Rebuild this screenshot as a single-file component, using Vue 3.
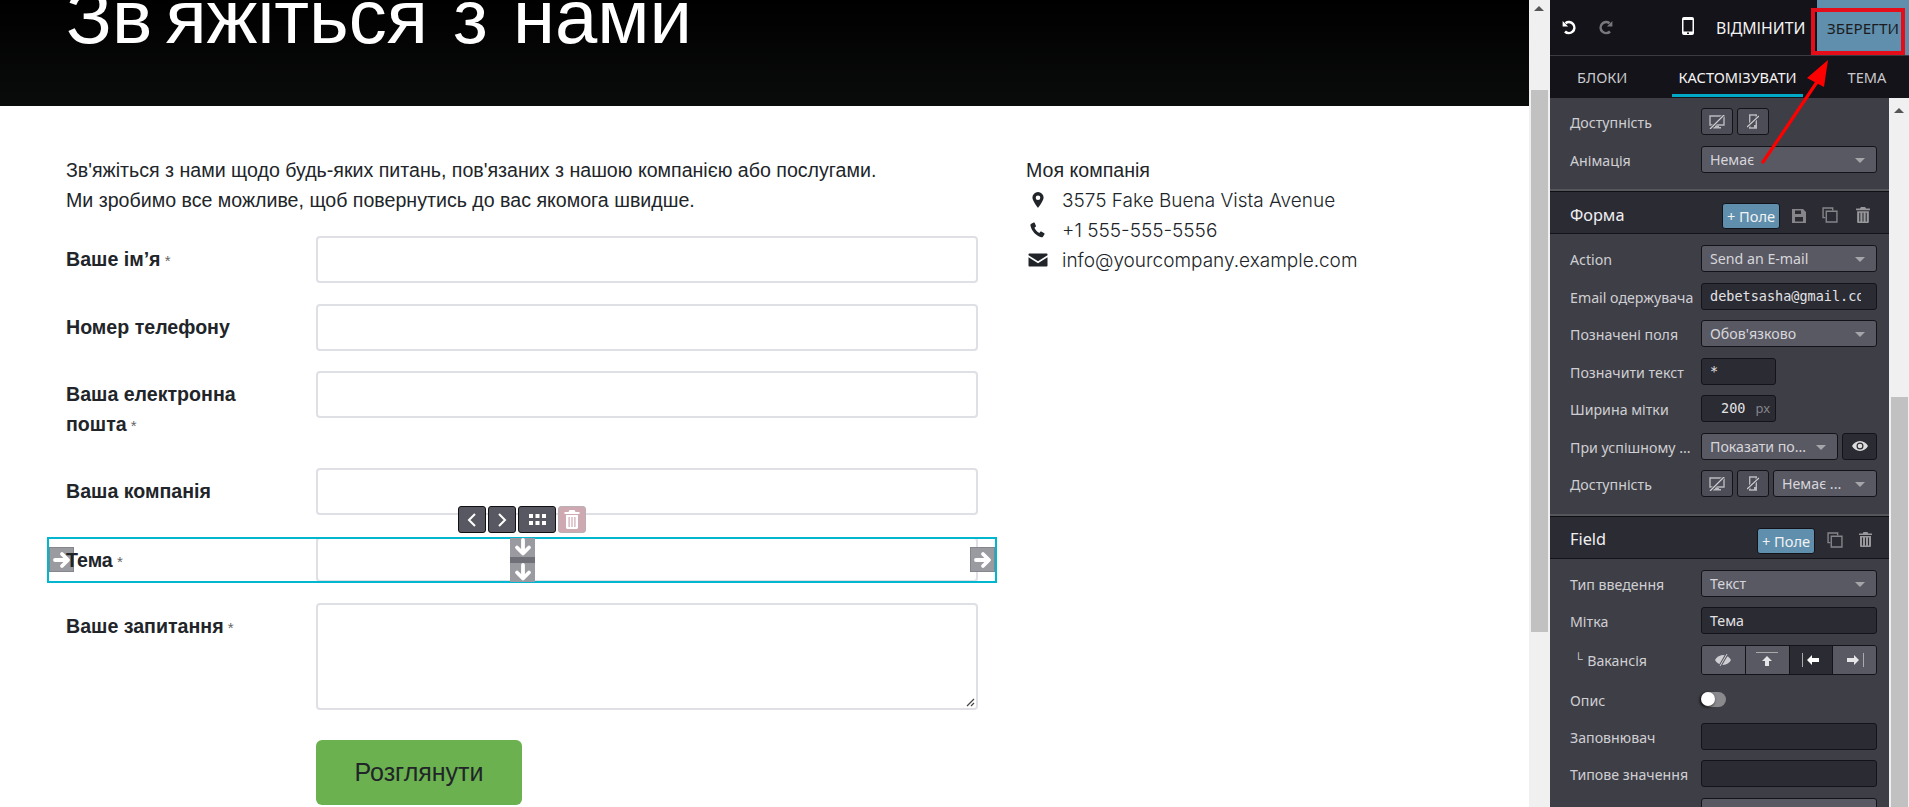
<script setup>
const fields = [
  { label: 'Ваше ім’я', req: true, cls: '' },
  { label: 'Номер телефону', req: false, cls: '' },
  { label: 'Ваша електронна пошта', req: true, cls: 'tall' },
  { label: 'Ваша компанія', req: false, cls: '' },
  { label: 'Тема', req: true, cls: 'selected' },
]
</script>

<template>
  <div class="app">
    <main class="page">
      <header class="hero"><h1><span class="first-word">Зв</span> яжіться з нами</h1></header>
      <section class="content">
        <div class="main-col">
          <p class="intro">Зв'яжіться з нами щодо будь-яких питань, пов'язаних з нашою компанією або послугами.<br>Ми зробимо все можливе, щоб повернутись до вас якомога швидше.</p>
          <form class="form" @submit.prevent>
            <div v-for="f in fields" :key="f.label" class="row" :class="f.cls">
              <label class="lab">{{ f.label }}<span v-if="f.req" class="req"> *</span></label>
              <div class="inp"></div>
            </div>
            <div class="row">
              <label class="lab">Ваше запитання<span class="req"> *</span></label>
              <div class="inp area">
                <svg class="grip" width="10" height="10" viewBox="0 0 10 10"><path d="M9 2 2 9M9 6 6 9" stroke="#444" stroke-width="1.2"/></svg>
              </div>
            </div>
            <div class="row submit">
              <span></span>
              <button class="send" type="button">Розглянути</button>
            </div>
          </form>
        </div>
        <aside class="contact">
          <div class="c-title">Моя компанія</div>
          <div class="c-row">
            <svg class="c-ic" width="18" height="18" viewBox="0 0 18 18"><path fill-rule="evenodd" fill="#212529" d="M9 1a5.6 5.6 0 0 0-5.6 5.6C3.400 10 9 17 9 17s5.600-7 5.600-10.400A5.600 5.600 0 0 0 9 1Zm0 3.400a2.300 2.300 0 1 1 0 4.600 2.300 2.300 0 0 1 0-4.600Z"/></svg>
            <span>3575 Fake Buena Vista Avenue</span>
          </div>
          <div class="c-row">
            <svg class="c-ic" width="18" height="18" viewBox="0 0 18 18"><path fill="#212529" d="M4.600 1.500 2.300 2.700c-.7.400-1 1.200-.8 2 1.300 5.500 5.300 9.800 10.600 11.600.8.200 1.600-.1 2-.8l1.400-2.300c.2-.4.100-.8-.2-1l-3-1.700c-.4-.2-.8-.1-1 .2l-1 1.300c-2.200-1-4-3-4.900-5.200l1.300-1c.3-.3.400-.7.200-1.100L5.600 1.800c-.2-.4-.6-.5-1-.3Z"/></svg>
            <span>+1 555-555-5556</span>
          </div>
          <div class="c-row">
            <svg class="c-ic" width="20" height="18" viewBox="0 0 20 18"><path fill="#212529" d="M1.500 2.500h17c.6 0 1 .4 1 1v.8L10 10.300.5 4.300v-.8c0-.6.4-1 1-1ZM.5 6.200 10 12.200l9.500-6v8.300c0 .6-.4 1-1 1h-17c-.6 0-1-.4-1-1Z"/></svg>
            <span>info@yourcompany.example.com</span>
          </div>
        </aside>
      </section>

      <div class="sel-box"></div>
      <div class="handle h-left"><svg width="20" height="20" viewBox="0 0 20 20"><path d="M3 10h12M10 4l6 6-6 6" fill="none" stroke="#fff" stroke-width="3.800" stroke-linecap="round" stroke-linejoin="round"/></svg></div>
      <div class="handle h-right"><svg width="20" height="20" viewBox="0 0 20 20"><path d="M3 10h12M10 4l6 6-6 6" fill="none" stroke="#fff" stroke-width="3.800" stroke-linecap="round" stroke-linejoin="round"/></svg></div>
      <div class="handle-v">
        <div class="hv"><svg width="20" height="19" viewBox="0 0 20 19"><path d="M10 2v13M4 9.500l6 6 6-6" fill="none" stroke="#fff" stroke-width="3.800" stroke-linecap="round" stroke-linejoin="round"/></svg></div>
        <div class="hv-mid"></div>
        <div class="hv"><svg width="20" height="19" viewBox="0 0 20 19"><path d="M10 2v13M4 9.500l6 6 6-6" fill="none" stroke="#fff" stroke-width="3.800" stroke-linecap="round" stroke-linejoin="round"/></svg></div>
      </div>
      <div class="toolbar">
        <div class="tb"><svg width="12" height="16" viewBox="0 0 12 16"><path d="M9 2 3 8l6 6" fill="none" stroke="#fff" stroke-width="2"/></svg></div>
        <div class="tb"><svg width="12" height="16" viewBox="0 0 12 16"><path d="m3 2 6 6-6 6" fill="none" stroke="#fff" stroke-width="2"/></svg></div>
        <div class="tb wide"><svg width="17" height="11" viewBox="0 0 17 11"><path fill="#fff" d="M0 0h4v4H0zM6.500 0h4v4h-4zM13 0h4v4h-4zM0 7h4v4H0zM6.500 7h4v4h-4zM13 7h4v4h-4z"/></svg></div>
        <div class="tb danger"><svg width="16" height="19" viewBox="0 0 16 19"><path fill="#fff" d="M5.500 0h5l1 2H15.500v2H.5V2h4ZM2 5h12v12.500c0 .8-.7 1.500-1.500 1.500h-9C2.700 19 2 18.300 2 17.500Zm2.500 2v10h1.200V7Zm2.900 0v10h1.200V7Zm2.900 0v10h1.200V7Z"/></svg></div>
      </div>
    </main>

    <div class="scroll outer"><span class="up"></span><span class="thumb t1"></span></div>

    <aside class="side">
      <div class="top">
        <svg class="undo" width="15" height="15" viewBox="0 0 15 15"><path d="M3.500 3.200A5.500 5.500 0 1 1 3 11.500" fill="none" stroke="#fff" stroke-width="2.600"/><path fill="#fff" d="M.6 1v5.500h5.500Z"/></svg>
        <svg class="redo" width="15" height="15" viewBox="0 0 15 15"><path d="M11.500 3.200A5.500 5.500 0 1 0 12 11.500" fill="none" stroke="#77777c" stroke-width="2.600"/><path fill="#77777c" d="M14.400 1v5.500H8.900Z"/></svg>
        <svg class="phone" width="12" height="18" viewBox="0 0 12 18"><path fill-rule="evenodd" fill="#fff" d="M2 0h8a2 2 0 0 1 2 2v14a2 2 0 0 1-2 2H2a2 2 0 0 1-2-2V2a2 2 0 0 1 2-2Zm-.5 3v11.500h9V3Zm3.500 12.500V17h2v-1.500Z"/></svg>
        <span class="cancel">ВІДМІНИТИ</span>
        <button class="save" type="button">ЗБЕРЕГТИ</button>
      </div>
      <nav class="tabs">
        <span class="tab">БЛОКИ</span>
        <span class="tab on">КАСТОМІЗУВАТИ</span>
        <span class="tab">ТЕМА</span>
      </nav>
      <div class="body">
        <div class="panel">
          <div class="sec first">
            <div class="p-row">
              <span class="p-lab">Доступність</span>
              <div class="ctrls">
                <button class="ic" type="button"><svg width="16" height="14" viewBox="0 0 16 14"><path d="M1 1h14v9H1Z" fill="none" stroke="#b9b9bf" stroke-width="1.400"/><path fill="#b9b9bf" d="M6 11h4v1h2v1.500H4V12h2Z"/><path d="M15 0 1 14" stroke="#4d4d57" stroke-width="3"/><path d="M15 0 1 14" stroke="#d0d0d4" stroke-width="1.200"/></svg></button>
                <button class="ic" type="button"><svg width="12" height="15" viewBox="0 0 12 15"><path d="M2.700 1h6.600v13H2.700Z" fill="none" stroke="#b9b9bf" stroke-width="1.400"/><path fill="#b9b9bf" d="M7 11h2v3H7Z"/><path d="M12 2 0 13" stroke="#4d4d57" stroke-width="3"/><path d="M12 2 0 13" stroke="#d0d0d4" stroke-width="1.200"/></svg></button>
              </div>
            </div>
            <div class="p-row">
              <span class="p-lab">Анімація</span>
              <div class="sel full">Немає<i class="caret"></i></div>
            </div>
          </div>

          <div class="sec-head">
            <span class="s-title">Форма</span>
            <button class="add" type="button">+ Поле</button>
            <svg class="s-ic save-ic" width="14" height="14" viewBox="0 0 14 14"><path fill-rule="evenodd" fill="#85858a" d="M0 0h11l3 3v11H0Zm3 1.500V5h6V1.500ZM3 8v4.500h8V8Z"/></svg>
            <svg class="s-ic copy-ic" width="16" height="16" viewBox="0 0 15 15"><path d="M10 3V1H1v9h2M4 4h10v10H4Z" fill="none" stroke="#85858a" stroke-width="1.300"/></svg>
            <svg class="s-ic trash-ic" width="14" height="16" viewBox="0 0 13 15"><path fill="#97979c" d="M4.500 0h4l.8 1.500H13V3H0V1.500h3.700ZM1 4h11v10a1 1 0 0 1-1 1H2a1 1 0 0 1-1-1Zm2 1.500V13.500h1V5.500Zm3 0V13.500h1V5.500Zm3 0V13.500h1V5.500Z"/></svg>
          </div>
          <div class="sec">
            <div class="p-row"><span class="p-lab">Action</span><div class="sel full">Send an E-mail<i class="caret"></i></div></div>
            <div class="p-row"><span class="p-lab">Email одержувача</span><div class="txt full mono"><span class="clip">debetsasha@gmail.com</span></div></div>
            <div class="p-row"><span class="p-lab">Позначені поля</span><div class="sel full">Обов'язково<i class="caret"></i></div></div>
            <div class="p-row"><span class="p-lab">Позначити текст</span><div class="txt short mono">*</div></div>
            <div class="p-row"><span class="p-lab">Ширина мітки</span><div class="txt short mono num">200 <em>px</em></div></div>
            <div class="p-row">
              <span class="p-lab">При успішному ...</span>
              <div class="ctrls">
                <div class="sel w137">Показати по...<i class="caret"></i></div>
                <button class="ic eye" type="button"><svg width="16" height="12" viewBox="0 0 16 12"><path fill-rule="evenodd" fill="#ddd" d="M8 1c3.500 0 6.500 2.200 8 5-1.500 2.800-4.500 5-8 5S1.500 8.800 0 6c1.500-2.800 4.500-5 8-5Zm0 1.500a3.500 3.500 0 1 0 0 7 3.500 3.500 0 0 0 0-7Z"/><circle cx="8" cy="6" r="2.300" fill="#ddd"/></svg></button>
              </div>
            </div>
            <div class="p-row">
              <span class="p-lab">Доступність</span>
              <div class="ctrls">
                <button class="ic" type="button"><svg width="16" height="14" viewBox="0 0 16 14"><path d="M1 1h14v9H1Z" fill="none" stroke="#b9b9bf" stroke-width="1.400"/><path fill="#b9b9bf" d="M6 11h4v1h2v1.500H4V12h2Z"/><path d="M15 0 1 14" stroke="#4d4d57" stroke-width="3"/><path d="M15 0 1 14" stroke="#d0d0d4" stroke-width="1.200"/></svg></button>
                <button class="ic" type="button"><svg width="12" height="15" viewBox="0 0 12 15"><path d="M2.700 1h6.600v13H2.700Z" fill="none" stroke="#b9b9bf" stroke-width="1.400"/><path fill="#b9b9bf" d="M7 11h2v3H7Z"/><path d="M12 2 0 13" stroke="#4d4d57" stroke-width="3"/><path d="M12 2 0 13" stroke="#d0d0d4" stroke-width="1.200"/></svg></button>
                <div class="sel w104">Немає ...<i class="caret"></i></div>
              </div>
            </div>
          </div>

          <div class="sec-head">
            <span class="s-title">Field</span>
            <button class="add field" type="button">+ Поле</button>
            <svg class="s-ic f-copy" width="16" height="16" viewBox="0 0 15 15"><path d="M10 3V1H1v9h2M4 4h10v10H4Z" fill="none" stroke="#85858a" stroke-width="1.300"/></svg>
            <svg class="s-ic f-trash" width="13" height="15" viewBox="0 0 13 15"><path fill="#97979c" d="M4.500 0h4l.8 1.500H13V3H0V1.500h3.700ZM1 4h11v10a1 1 0 0 1-1 1H2a1 1 0 0 1-1-1Zm2 1.500V13.500h1V5.500Zm3 0V13.500h1V5.500Zm3 0V13.500h1V5.500Z"/></svg>
          </div>
          <div class="sec">
            <div class="p-row"><span class="p-lab">Тип введення</span><div class="sel full">Текст<i class="caret"></i></div></div>
            <div class="p-row"><span class="p-lab">Мітка</span><div class="txt full">Тема</div></div>
            <div class="p-row seg-row">
              <span class="p-lab sub"><b>└</b> Вакансія</span>
              <div class="seg">
                <span><svg width="16" height="12" viewBox="0 0 16 12"><path fill="#cfcfd3" d="M8 1c3.500 0 6.500 2.200 8 5-1.500 2.800-4.500 5-8 5S1.500 8.800 0 6c1.500-2.800 4.500-5 8-5Z"/><path d="M12 0 5 12" stroke="#595964" stroke-width="3"/><path d="M12 0 5 12" stroke="#cfcfd3" stroke-width="1"/></svg></span>
                <span><svg width="22" height="15" viewBox="0 0 22 15"><path d="M0 .5h22" stroke="#aaa"/><path fill="#e6e6e8" d="m11 4 5 5h-3v5H9V9H6Z"/></svg></span>
                <span class="active"><svg width="18" height="14" viewBox="0 0 18 14"><path d="M.5 0v14" stroke="#aaa"/><path fill="#fff" d="m5 7 5-5v3h7v4h-7v3Z"/></svg></span>
                <span><svg width="18" height="14" viewBox="0 0 18 14"><path d="M17.500 0v14" stroke="#aaa"/><path fill="#e6e6e8" d="m13 7-5-5v3H1v4h7v3Z"/></svg></span>
              </div>
            </div>
            <div class="p-row tog-row"><span class="p-lab">Опис</span><div class="toggle"><i></i></div></div>
            <div class="p-row"><span class="p-lab">Заповнювач</span><div class="txt full"></div></div>
            <div class="p-row"><span class="p-lab">Типове значення</span><div class="txt full"></div></div>
            <div class="p-row"><span class="p-lab"></span><div class="sel full"></div></div>
          </div>
        </div>
        <div class="scroll inner"><span class="up low"></span><span class="thumb t2"></span></div>
      </div>
    </aside>

    <div class="red-box"></div>
    <svg class="red-arrow" width="90" height="120" viewBox="0 0 90 120">
      <path d="M4 106 58 26" stroke="#f00" stroke-width="3.200" stroke-linecap="round"/>
      <path fill="#f00" d="M69 4 48 22l17 9Z"/>
    </svg>
  </div>
</template>

<style>
html, body { margin: 0; background: #fff; overflow: hidden; }
</style>

<style scoped>
.app { position: relative; display: flex; width: 1909px; height: 807px; overflow: hidden; font-family: "Liberation Sans", Arial, sans-serif; color: #212529; }
.page { position: relative; width: 1529px; flex: none; background: #fff; }
.hero { height: 106px; background: linear-gradient(#000, #0a0b0b); overflow: hidden; padding-left: 66px; }
.hero h1 { margin: -28px 0 0; font-weight: 400; font-size: 76px; line-height: 90px; color: #fff; white-space: nowrap; word-spacing: 4px; }
.first-word { margin-right: -12px; }
.content { display: flex; padding: 49px 0 0 66px; }
.main-col { width: 912px; flex: none; }
.intro { margin: 0 0 21px; font-size: 19.600px; line-height: 30px; white-space: nowrap; }
.row { display: grid; grid-template-columns: 250px 662px; margin-bottom: 20.500px; }
.row.tall { min-height: 76.500px; }
.row.selected { margin-top: 22px; margin-bottom: 21px; }
.row.selected .inp { height: 45px; }
.row.selected .lab { position: relative; z-index: 2; }
.lab { font-weight: 700; font-size: 19.600px; line-height: 30px; padding-top: 8px; padding-right: 40px; }
.req { font-weight: 400; font-size: 15px; color: #666; }
.inp { height: 47px; box-sizing: border-box; border: 2px solid #dee0e6; border-radius: 4px; background: #fff; }
.area { position: relative; height: 107px; }
.grip { position: absolute; right: 1px; bottom: 1px; }
.row.submit { margin-top: 30px; margin-bottom: 0; }
.send { width: 206px; height: 65px; border: 0; border-radius: 6px; background: #6bb14f; color: #212529; font: 400 25px "Liberation Sans", Arial, sans-serif; }
.contact { margin-left: 48px; width: 400px; font-size: 19.600px; }
.c-title { line-height: 30px; }
.c-row { display: flex; align-items: center; height: 30px; font-family: Inter, sans-serif; font-weight: 300; font-size: 19px; white-space: nowrap; }
.c-ic { width: 24px; flex: none; margin-right: 12px; }

.sel-box { position: absolute; left: 47px; top: 537px; width: 950px; height: 46px; box-sizing: border-box; border: 2px solid #00b7cf; }
.handle { position: absolute; z-index: 1; top: 547px; width: 25px; height: 25px; box-sizing: border-box; border: 1px solid #85858d; background: #9a9aa1; display: flex; align-items: center; justify-content: center; }
.h-left { left: 49px; }
.h-right { left: 970px; }
.handle-v { position: absolute; left: 510px; top: 538px; width: 25px; display: flex; flex-direction: column; }
.hv { height: 19px; background: #9a9aa1; display: flex; align-items: center; justify-content: center; }
.hv-mid { height: 6px; background: #707079; }
.toolbar { position: absolute; left: 458px; top: 506px; display: flex; gap: 2px; }
.tb { box-sizing: border-box; width: 28px; height: 27px; border: 1px solid #111; border-radius: 3px; background: #585862; display: flex; align-items: center; justify-content: center; }
.tb.wide { width: 38px; }
.tb.danger { background: #cfa9b2; border-color: #b8b0b4; }

.scroll { background: #f0f0f0; position: relative; flex: none; }
.outer { width: 21px; height: 807px; }
.inner { width: 20px; height: 100%; }
.up { position: absolute; left: 5px; top: 6px; width: 0; height: 0; border: 5px solid transparent; border-top: 0; border-bottom: 5px solid #555; }
.up.low { top: 10px; }
.thumb { position: absolute; background: #c1c1c1; }
.t1 { left: 2px; top: 90px; width: 17px; height: 542px; }
.t2 { left: 2px; top: 299px; width: 17px; bottom: 0; }

.side { width: 359px; flex: none; background: #141319; display: flex; flex-direction: column; font-family: "Noto Sans", "Open Sans", sans-serif; }
.top { height: 55px; flex: none; display: flex; align-items: center; border-bottom: 1px solid #3a3a40; }
.undo { margin-left: 12px; }
.redo { margin-left: 21px; }
.phone { margin-left: 69px; margin-top: -3px; }
.cancel { margin-left: 22px; color: #f2f2f2; font-size: 15.800px; white-space: nowrap; }
.save { margin-left: auto; width: 92px; height: 55px; border: 0; background: #5f8fad; color: #1b1b20; font: 400 15.200px "Noto Sans", sans-serif; padding: 0; white-space: nowrap; }
.tabs { height: 42px; flex: none; display: flex; gap: 39px; padding-left: 21px; }
.tab { padding: 0 6px; font-size: 14.600px; line-height: 42px; color: #c9c9cc; box-sizing: border-box; height: 41px; }
.tab.on { color: #f4f4f4; border-bottom: 3px solid #01a9c7; }
.body { flex: 1; min-height: 0; display: flex; }
.panel { width: 339px; flex: none; background: #3e3e46; overflow: hidden; }
.sec { padding: 11px 12px 7px 20px; }
.sec.first { padding-top: 10px; }
.p-row { display: flex; align-items: center; justify-content: space-between; height: 27px; margin-bottom: 10.500px; }
.p-lab { color: #cfcfd3; font-size: 14.200px; white-space: nowrap; line-height: 27px; margin-top: 2px; }
.ctrls { display: flex; gap: 4px; width: 176px; flex: none; }
.ic { width: 32px; height: 27px; box-sizing: border-box; padding: 0; border: 1px solid #141319; border-radius: 3px; background: #4d4d57; display: flex; align-items: center; justify-content: center; }
.eye { width: 35px; background: #2b2b33; }
.sel { position: relative; height: 27px; box-sizing: border-box; border: 1px solid #141319; border-radius: 3px; background: #595964; color: #d6d6da; font-size: 14.200px; line-height: 25px; padding-left: 8px; white-space: nowrap; overflow: hidden; }
.full { width: 176px; flex: none; }
.w137 { width: 137px; flex: none; }
.w104 { width: 104px; flex: none; }
.caret { position: absolute; right: 11px; top: 11px; width: 0; height: 0; border: 5px solid transparent; border-bottom: 0; border-top: 5px solid #a5a5aa; }
.txt { height: 27px; box-sizing: border-box; border: 1px solid #141319; border-radius: 3px; background: #2b2b33; color: #e2e2e5; font-size: 14.200px; line-height: 25px; padding-left: 8px; white-space: nowrap; overflow: hidden; }
.short { width: 75px; margin-right: 101px; flex: none; }
.mono { font-family: "DejaVu Sans Mono", monospace; font-size: 13.500px; }
.clip { display: block; width: 151px; overflow: hidden; }
.num { padding-left: 19px; }
.num em { font: 400 13px "Noto Sans", sans-serif; color: #85858c; margin-left: 2px; }
.sec-head { position: relative; height: 43px; background: #2b2b33; border-top: 1px solid #101014; border-bottom: 1px solid #141319; box-shadow: 0 -2px 0 #55555c; display: flex; align-items: center; padding-left: 20px; box-sizing: border-box; margin-top: 1px; }
.s-title { color: #f0f0f2; font-size: 16.300px; margin-top: 4px; }
.add { position: absolute; left: 172px; top: 11px; width: 58px; height: 26px; box-sizing: border-box; padding: 0; border: 1px solid #141319; border-radius: 3px; background: #5f8fad; color: #f2f2f2; font: 400 14.600px "Noto Sans", sans-serif; white-space: nowrap; }
.add.field { left: 207px; }
.s-ic { position: absolute; top: 15px; }
.save-ic { left: 242px; top: 17px; }
.copy-ic { left: 272px; }
.trash-ic { left: 306px; }
.f-copy { left: 277px; }
.f-trash { left: 309px; }
.seg-row { height: 30px; }
.sub { padding-left: 4px; }
.sub b { font-weight: 400; font-size: 12px; margin-right: 1px; position: relative; top: -3px; }
.seg { width: 176px; height: 30px; box-sizing: border-box; border: 1px solid #141319; border-radius: 3px; display: flex; overflow: hidden; flex: none; }
.seg span { flex: 1; background: #595964; display: flex; align-items: center; justify-content: center; border-left: 1px solid #141319; }
.seg span:first-child { border-left: 0; }
.seg span.active { background: #2b2b33; }
.tog-row { height: 16px; margin: 17px 0 15px; }
.toggle { position: relative; width: 176px; height: 15px; flex: none; }
.toggle::before { content: ""; position: absolute; left: 0; top: 0; width: 25px; height: 15px; border-radius: 8px; background: #8a8a8e; }
.toggle i { position: absolute; left: 0; top: 0; width: 14px; height: 14px; border-radius: 50%; background: #fff; box-shadow: -1px 1px 3px #000; }

.red-box { position: absolute; left: 1811px; top: 8px; width: 94px; height: 47px; box-sizing: border-box; border: 4px solid #e60d1b; }
.red-arrow { position: absolute; left: 1759px; top: 56px; }
</style>
